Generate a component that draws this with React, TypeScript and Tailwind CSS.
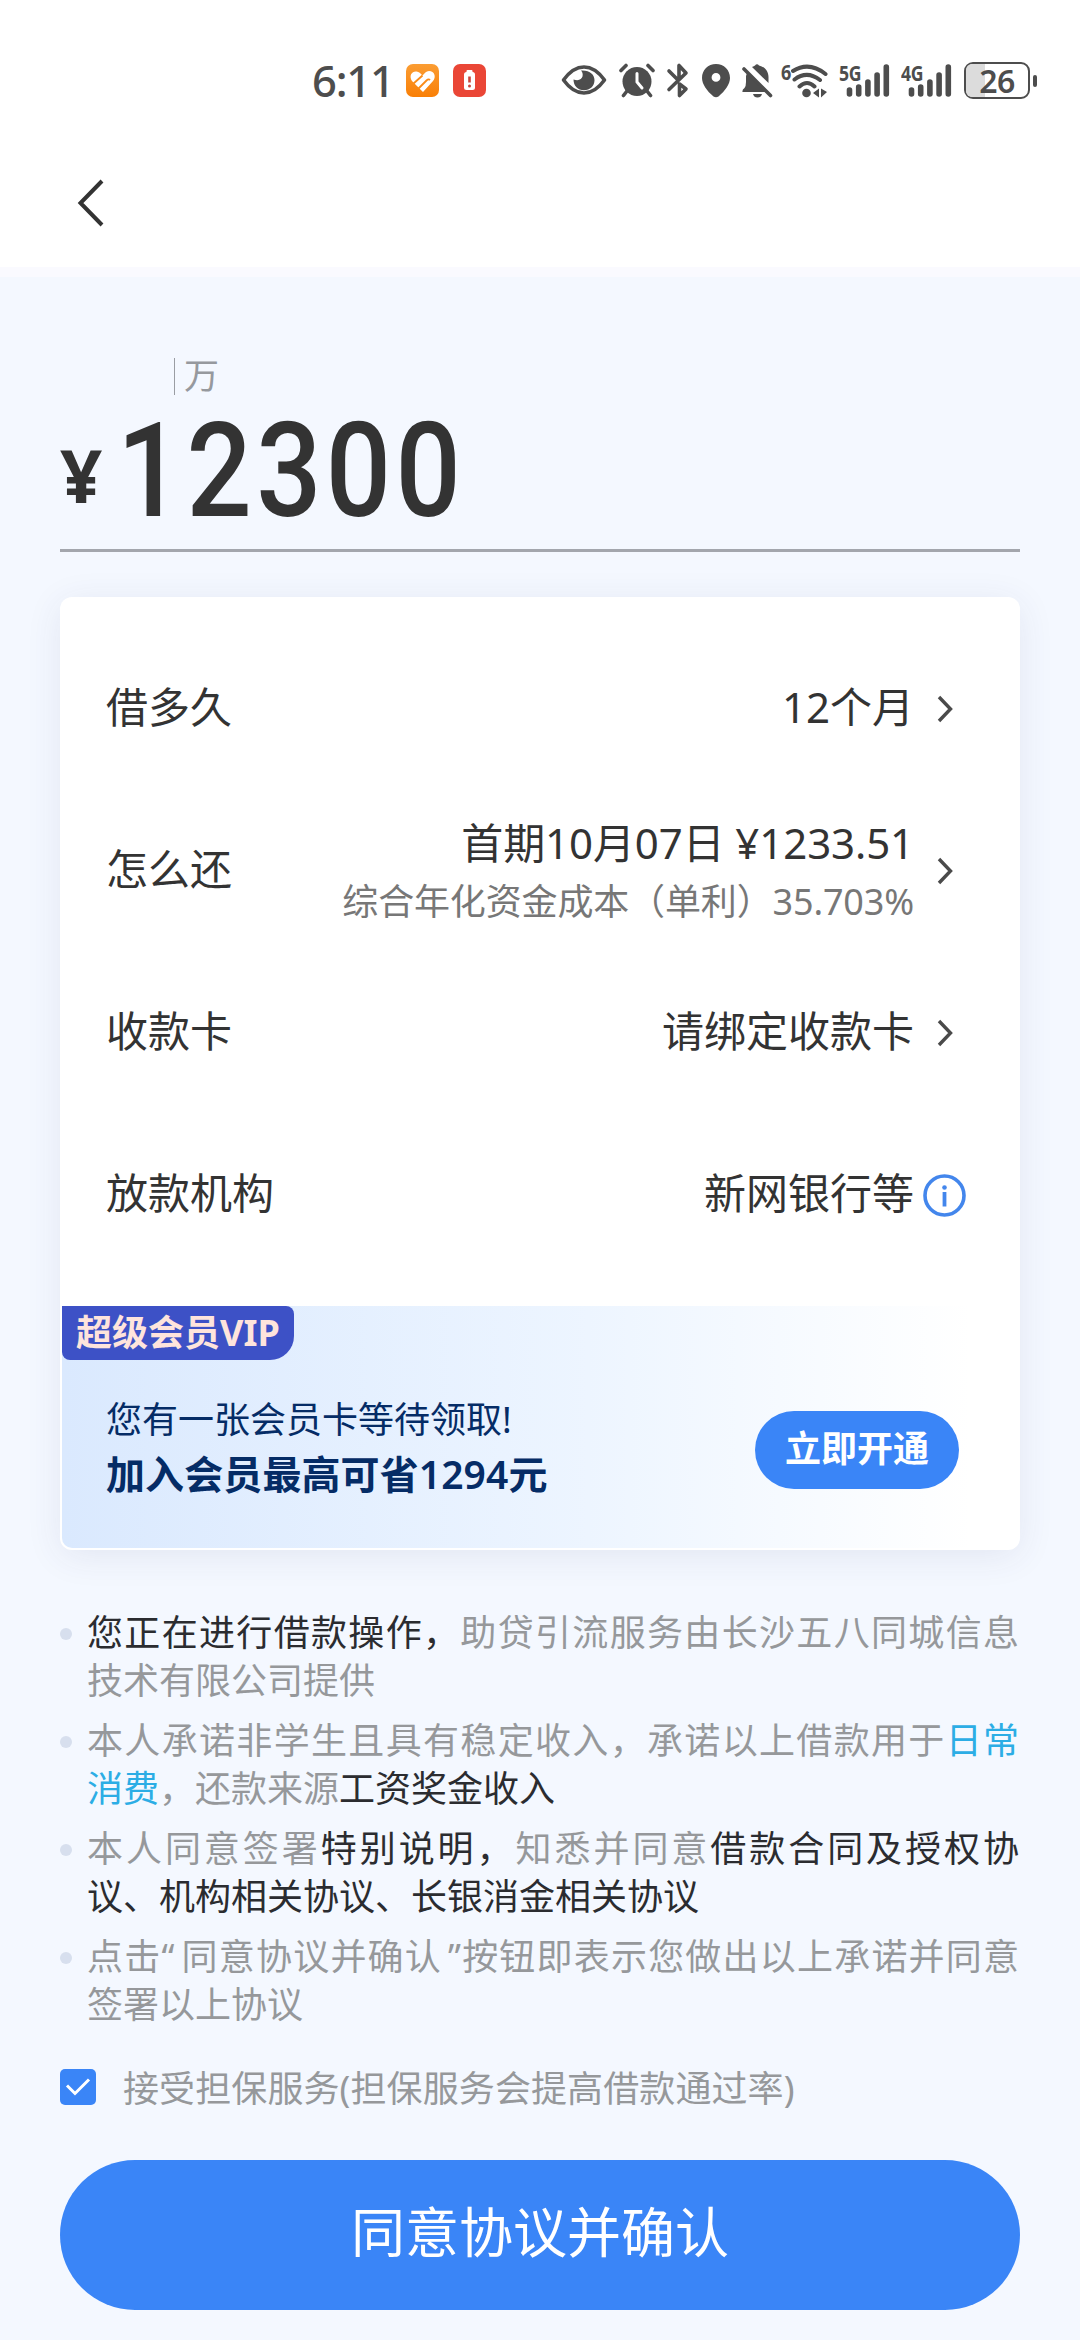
import type { ReactNode } from "react";

type RowProps = {
  label: string;
  icon: ReactNode;
  children: ReactNode;
};

function StatusBar() {
  return (
    <div className="flex h-[160px] items-start pt-[62px] pl-[312px] text-[#4d4d4d]">
      <div className="-mt-px w-[94px] text-[43.5px] leading-[38px] font-medium tracking-[-1.2px]">
        6:11
      </div>
      <div className="mt-[2px] flex gap-[14px]">
        <HeartAppIcon />
        <BatteryAppIcon />
      </div>
      <div className="ml-[75px] flex">
        <EyeIcon />
        <AlarmIcon />
        <BluetoothIcon />
        <PinIcon />
        <BellOffIcon />
        <WifiIcon />
        <Signal label="5G" />
        <Signal label="4G" />
      </div>
      <Battery level={26} />
    </div>
  );
}

function HeartAppIcon() {
  return (
    <svg width="33" height="33" viewBox="0 0 33 33">
      <defs>
        <linearGradient id="heartBg" x1="0" y1="0" x2="0" y2="1">
          <stop offset="0" stopColor="#fb9d33" />
          <stop offset="1" stopColor="#f97f06" />
        </linearGradient>
      </defs>
      <rect width="33" height="33" rx="7" fill="url(#heartBg)" />
      <path
        d="M6 17C2.500 11.500 6 7 10.500 7.500C13 7.800 14.500 9.500 16.500 11.500C18.500 9.500 20 7 23 7C28.500 7 30.500 13 27 17L17 28L13.500 24.500L11 22Z"
        fill="#fff"
      />
      <path
        d="M7.500 19.500L16.500 11.500M12.500 24.500L20.500 16.500Q22.500 14.500 24 16"
        stroke="#fa8b18"
        strokeWidth="1.8"
        fill="none"
      />
    </svg>
  );
}

function BatteryAppIcon() {
  return (
    <svg width="33" height="33" viewBox="0 0 33 33">
      <rect width="33" height="33" rx="7" fill="#ea4636" />
      <rect x="13.500" y="6" width="6" height="3" rx="1" fill="#fff" />
      <rect x="11" y="8" width="11" height="18" rx="2.500" fill="#fff" />
      <path d="M16.500 12.500V18.500" stroke="#c9453c" strokeWidth="2.600" />
      <circle cx="16.500" cy="22" r="1.500" fill="#c9453c" />
    </svg>
  );
}

function EyeIcon() {
  return (
    <svg width="46" height="36" viewBox="0 0 46 36">
      <path
        d="M2.500 18C9 9 15.500 5 23 5S37 9 43.500 18C37 27 30.500 31 23 31S9 27 2.500 18Z"
        fill="none"
        stroke="currentColor"
        strokeWidth="3.600"
        strokeLinejoin="round"
      />
      <path
        d="M20 8.500C23.500 12 22 20.500 12.500 17.500C12.500 24 17 28.300 23 28.300S33.500 24 33.500 18.300S29 8 20 8.500Z"
        fill="currentColor"
      />
    </svg>
  );
}

function AlarmIcon() {
  return (
    <svg width="36" height="36" viewBox="0 0 36 36" className="ml-[12px]">
      <circle cx="18" cy="19.500" r="14.500" fill="currentColor" />
      <path
        d="M2 8.500L7 3.500M34 8.500L29 3.500M8 29L4.500 33.500M28 29L31.500 33.500"
        stroke="currentColor"
        strokeWidth="3.600"
        strokeLinecap="round"
      />
      <path
        d="M18 11.500V20L23 26"
        fill="none"
        stroke="#fff"
        strokeWidth="3"
        strokeLinecap="round"
      />
    </svg>
  );
}

function BluetoothIcon() {
  return (
    <svg width="24" height="37" viewBox="0 0 24 37" className="ml-[11px]">
      <path
        d="M3 9L11.500 17.500M3 27.500L20 11L13 3.500V14.500M13.500 22L20 27L13.500 33.500Z"
        fill="none"
        stroke="currentColor"
        strokeWidth="3.600"
        strokeLinecap="round"
        strokeLinejoin="round"
      />
    </svg>
  );
}

function PinIcon() {
  return (
    <svg width="28" height="36" viewBox="0 0 28 36" className="ml-[12px]">
      <path
        d="M14 2C6 2 0 8 0 16C0 22 5 29 11.500 34.500Q14 36 16.500 34.500C23 29 28 22 28 16C28 8 22 2 14 2ZM14 11A4.400 4.400 0 1 1 14 19.800A4.400 4.400 0 1 1 14 11Z"
        fill="currentColor"
        fillRule="evenodd"
      />
    </svg>
  );
}

function BellOffIcon() {
  return (
    <svg width="32" height="36" viewBox="0 0 32 36" className="ml-[11px]">
      <path
        d="M11 5Q13 4 14 3.500Q16 1 18 3.500C24 5 27.500 9.500 27.500 15V21ZM6 11L25 30H1.500Q1 27.500 3.500 26Q5 24 5 20V14Z"
        fill="currentColor"
      />
      <path d="M12 32H21Q20 35.500 16.500 35.500T12 32Z" fill="currentColor" />
      <path
        d="M3 7L29.500 33.500"
        stroke="currentColor"
        strokeWidth="3.600"
        strokeLinecap="round"
      />
    </svg>
  );
}

function WifiIcon() {
  return (
    <div className="ml-[8px] flex">
      <span className="-mt-[7px] w-[10px] origin-left scale-x-[0.82] text-[22px] leading-[32px] font-bold">
        6
      </span>
      <svg width="38" height="36" viewBox="0 0 38 36" className="-ml-px">
        <path
          d="M3 9Q19 -1 35.500 12M4.500 17.500Q17 8 30 18M9.500 24.500Q17 17.500 24.500 24.500"
          fill="none"
          stroke="currentColor"
          strokeWidth="4"
          strokeLinecap="round"
        />
        <circle cx="16.500" cy="31" r="4.300" fill="currentColor" />
        <path
          d="M23 31L29 26.500V35.500ZM31 26.500L37 30L31 35.500Z"
          fill="currentColor"
        />
      </svg>
    </div>
  );
}

function Signal({ label }: { label: string }) {
  return (
    <div className="relative ml-[11px] h-[36px] w-[51px]">
      <span className="absolute -top-[6px] left-0 origin-left scale-x-[0.8] text-[22px] leading-[32px] font-bold tracking-[-0.5px]">
        {label}
      </span>
      <svg width="51" height="36" viewBox="0 0 51 36">
        <path
          d="M10.500 28V32M19.700 25V32M28.900 20V32M38.100 13V32M47.300 5V32"
          stroke="currentColor"
          strokeWidth="5.600"
          strokeLinecap="round"
        />
      </svg>
    </div>
  );
}

function Battery({ level }: { level: number }) {
  return (
    <div className="ml-[12px] flex items-center gap-[3px]">
      <div className="relative flex h-[37px] w-[66px] items-center justify-center rounded-[9px] border-[2.500px] border-[#4d4d4d]">
        <div
          className="absolute inset-y-0 left-0 rounded-l-[6px] bg-[#dcdcdc]"
          style={{ width: `${level + 4}%` }}
        />
        <span className="relative text-[32px] leading-[32px] font-semibold tracking-[-0.5px]">
          {level}
        </span>
      </div>
      <div className="h-[12px] w-[4px] rounded-[2px] bg-[#4d4d4d]" />
    </div>
  );
}

function ChevronRight() {
  return (
    <svg width="16" height="28" viewBox="0 0 16 28" className="ml-[1px]">
      <path
        d="M2 2L13.500 14L2 26"
        fill="none"
        stroke="#4a4a4a"
        strokeWidth="3.400"
      />
    </svg>
  );
}

function InfoIcon() {
  return (
    <svg width="43" height="43" viewBox="0 0 43 43" className="-ml-[13px]">
      <circle
        cx="21.500"
        cy="21.500"
        r="19.500"
        fill="none"
        stroke="#4386ec"
        strokeWidth="3.600"
      />
      <circle cx="21.500" cy="13.500" r="2.300" fill="#4386ec" />
      <path d="M21.500 18V32.500" stroke="#4386ec" strokeWidth="3.800" />
    </svg>
  );
}

function Row({ label, icon, children }: RowProps) {
  return (
    <div className="flex h-[162px] items-center pl-[46px] text-[42px] text-[#333]">
      <div className="pb-[4px] leading-[60px]">{label}</div>
      <div className="ml-auto pb-[4px] text-right leading-[60px]">{children}</div>
      <div className="ml-[22px] flex w-[84px] items-center">{icon}</div>
    </div>
  );
}

function VipBanner() {
  return (
    <div className="mx-[2px] mb-[2px] h-[242px] rounded-b-[10px] bg-linear-to-r from-[#dae9fe] via-[#edf5ff] via-55% to-white to-95%">
      <div className="flex h-[54px] w-[232px] items-center rounded-tr-[8px] rounded-br-[24px] rounded-bl-[8px] bg-[#3d51c6] pb-px pl-[14px] text-[36px] leading-[50px] font-bold text-[#fee4dc]">
        超级会员VIP
      </div>
      <div className="flex items-center justify-between pt-[33px] pr-[59px] pl-[44px] text-[#052c66]">
        <div className="leading-[54px]">
          <div className="text-[36px]">您有一张会员卡等待领取!</div>
          <div className="text-[39px] font-semibold tracking-[0.1px]">
            加入会员最高可省1294元
          </div>
        </div>
        <button className="mt-[6px] h-[78px] w-[204px] rounded-full bg-[#3a85f7] pb-[3px] text-[36px] font-semibold text-white">
          立即开通
        </button>
      </div>
    </div>
  );
}

function Dark({ children }: { children: ReactNode }) {
  return <span className="text-[#2b2c30]">{children}</span>;
}

function Blue({ children }: { children: ReactNode }) {
  return <span className="text-[#2cade5]">{children}</span>;
}

const notices: ReactNode[] = [
  <>
    <Dark>您正在进行借款操作，</Dark>助贷引流服务由长沙五八同城信息技术有限公司提供
  </>,
  <>
    本人承诺非学生且具有稳定收入，承诺以上借款用于<Blue>日常消费</Blue>，还款来源
    <Dark>工资奖金收入</Dark>
  </>,
  <>
    本人同意签署<Dark>特别说明，</Dark>知悉并同意
    <Dark>借款合同及授权协议、机构相关协议、长银消金相关协议</Dark>
  </>,
  <>
    点击<span className="mr-[6px]">“</span>同意协议并确认
    <span className="ml-[6px]">”</span>按钮即表示您做出以上承诺并同意签署以上协议
  </>,
];

export default function App() {
  return (
    <div
      lang="zh-CN"
      className="h-[2340px] w-[1080px] overflow-hidden bg-[#f4f8ff] font-['Noto_Sans','Noto_Sans_CJK_SC',sans-serif]"
    >
      <header className="h-[277px] border-b-[10px] border-[#fafaff] bg-white">
        <StatusBar />
        <svg width="30" height="50" viewBox="0 0 30 50" className="mt-[18px] ml-[76px]">
          <path
            d="M26 3L4.500 25L26 47"
            fill="none"
            stroke="#333"
            strokeWidth="4"
          />
        </svg>
      </header>

      <main className="px-[60px]">
        <div className="h-[275px] border-b-[3px] border-[#a3a6ad] pt-[81px]">
          <div className="ml-[114px] flex h-[37px] items-center border-l border-[#9a9da3] pl-[9px] text-[35px] text-[#96999e]">
            万
          </div>
          <div className="flex text-[#333]">
            <span className="w-[57px] text-[74px] leading-[159px] font-bold">¥</span>
            <span className="origin-left scale-x-[0.87] font-[Roboto] text-[132px] leading-[153px] font-medium tracking-[5px]">
              12300
            </span>
          </div>
        </div>

        <section className="mt-[45px] h-[953px] rounded-[12px] bg-white pt-[31px] shadow-[0_6px_36px_rgba(50,60,110,0.09)]">
          <Row label="借多久" icon={<ChevronRight />}>
            12个月
          </Row>
          <Row label="怎么还" icon={<ChevronRight />}>
            <div className="pt-[5px] tracking-[-0.1px]">首期10月07日 ¥1233.51</div>
            <div className="text-[36px] leading-[57px] tracking-[-0.15px] text-[#777]">
              综合年化资金成本（单利）35.703%
            </div>
          </Row>
          <Row label="收款卡" icon={<ChevronRight />}>
            请绑定收款卡
          </Row>
          <Row label="放款机构" icon={<InfoIcon />}>
            新网银行等
          </Row>
          <div className="h-[30px]" />
          <VipBanner />
        </section>

        <ul className="mt-[59px] space-y-[12px] text-[36px] leading-[48px] text-[#96989b]">
          {notices.map((notice, i) => (
            <li key={i} className="flex">
              <i className="mt-[19px] size-[12px] shrink-0 rounded-full bg-[#d7dfee]" />
              <p className="ml-[15px] w-[932px] text-justify">{notice}</p>
            </li>
          ))}
        </ul>

        <label className="mt-[40px] flex h-[36px] items-center text-[36px] text-[#96989b]">
          <span className="flex size-[36px] items-center justify-center rounded-[5px] bg-[#3a85f7]">
            <svg width="26" height="20" viewBox="0 0 26 20">
              <path d="M2 8.500L10 16.500L24 2.500" fill="none" stroke="#fff" strokeWidth="3" />
            </svg>
          </span>
          <span className="ml-[27px] pt-[3px] tracking-[0.1px]">
            接受担保服务(担保服务会提高借款通过率)
          </span>
        </label>

        <button className="mt-[55px] h-[150px] w-full rounded-full bg-[#3a85f7] pb-[6px] text-[54px] text-white">
          同意协议并确认
        </button>
      </main>
    </div>
  );
}
